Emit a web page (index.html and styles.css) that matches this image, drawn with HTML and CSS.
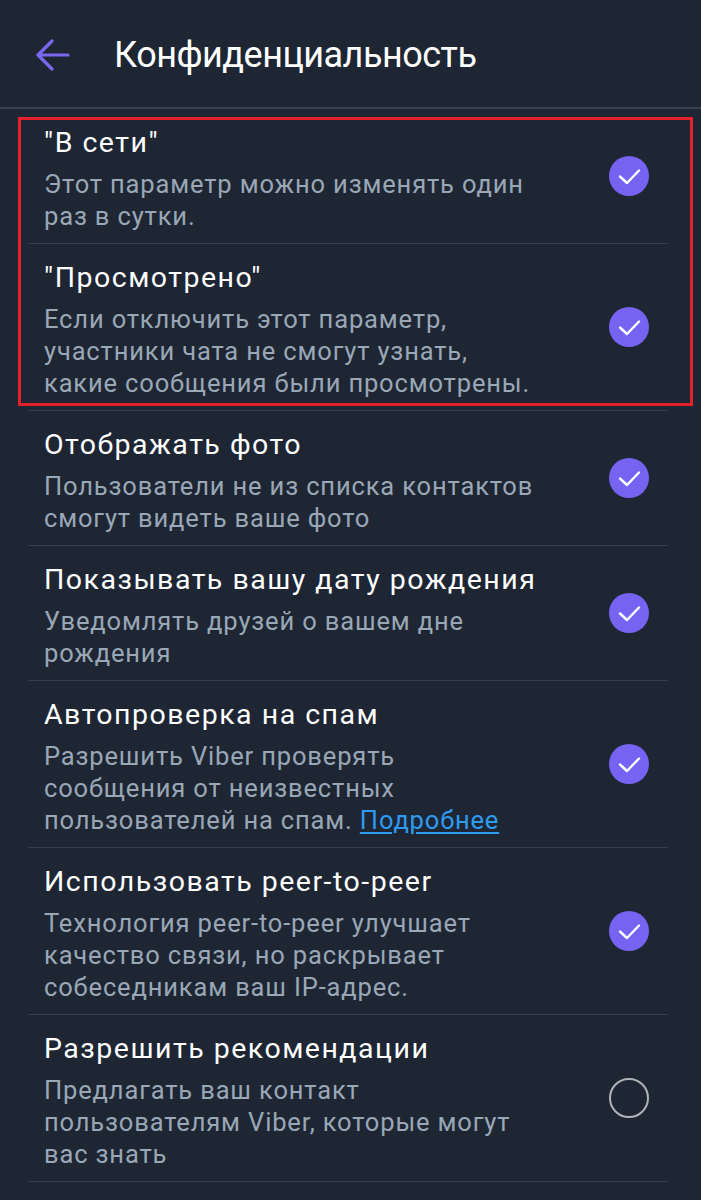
FILE: index.html
```html
<!DOCTYPE html>
<html lang="ru">
<head>
<meta charset="utf-8">
<link rel="stylesheet" href="styles.css">
</head>
<body>
<header class="topbar">
  <svg class="back" width="34" height="32" viewBox="0 0 34 32"><path d="M32 16H3M16 2L2 16l14 14" fill="none" stroke="#7a67f0" stroke-width="3.2" stroke-linecap="round" stroke-linejoin="round"/></svg>
  <h1 class="title">Конфиденциальность</h1>
</header>
<main class="list">
  <div class="row">
    <div class="text"><div class="name">"В сети"</div><div class="desc">Этот параметр можно изменять один раз в сутки.</div></div>
    <span class="check on"><svg width="40" height="40" viewBox="0 0 40 40"><path d="M11 20.5l7 6.5 12-12.5" fill="none" stroke="#fff" stroke-width="2.4" stroke-linecap="round" stroke-linejoin="round"/></svg></span>
  </div>
  <div class="row">
    <div class="text"><div class="name">"Просмотрено"</div><div class="desc">Если отключить этот параметр, участники чата не смогут узнать, какие сообщения были просмотрены.</div></div>
    <span class="check on"><svg width="40" height="40" viewBox="0 0 40 40"><path d="M11 20.5l7 6.5 12-12.5" fill="none" stroke="#fff" stroke-width="2.4" stroke-linecap="round" stroke-linejoin="round"/></svg></span>
  </div>
  <div class="row">
    <div class="text"><div class="name">Отображать фото</div><div class="desc">Пользователи не из списка контактов смогут видеть ваше фото</div></div>
    <span class="check on"><svg width="40" height="40" viewBox="0 0 40 40"><path d="M11 20.5l7 6.5 12-12.5" fill="none" stroke="#fff" stroke-width="2.4" stroke-linecap="round" stroke-linejoin="round"/></svg></span>
  </div>
  <div class="row">
    <div class="text"><div class="name">Показывать вашу дату рождения</div><div class="desc">Уведомлять друзей о вашем дне рождения</div></div>
    <span class="check on"><svg width="40" height="40" viewBox="0 0 40 40"><path d="M11 20.5l7 6.5 12-12.5" fill="none" stroke="#fff" stroke-width="2.4" stroke-linecap="round" stroke-linejoin="round"/></svg></span>
  </div>
  <div class="row">
    <div class="text"><div class="name">Автопроверка на спам</div><div class="desc">Разрешить Viber проверять сообщения от неизвестных пользователей на спам. <a class="more" href="#">Подробнее</a></div></div>
    <span class="check on"><svg width="40" height="40" viewBox="0 0 40 40"><path d="M11 20.5l7 6.5 12-12.5" fill="none" stroke="#fff" stroke-width="2.4" stroke-linecap="round" stroke-linejoin="round"/></svg></span>
  </div>
  <div class="row">
    <div class="text"><div class="name">Использовать peer-to-peer</div><div class="desc">Технология peer-to-peer улучшает качество связи, но раскрывает собеседникам ваш IP-адрес.</div></div>
    <span class="check on"><svg width="40" height="40" viewBox="0 0 40 40"><path d="M11 20.5l7 6.5 12-12.5" fill="none" stroke="#fff" stroke-width="2.4" stroke-linecap="round" stroke-linejoin="round"/></svg></span>
  </div>
  <div class="row">
    <div class="text"><div class="name">Разрешить рекомендации</div><div class="desc">Предлагать ваш контакт пользователям Viber, которые могут вас знать</div></div>
    <span class="check off"></span>
  </div>
</main>
<div class="highlight" aria-hidden="true"></div>
</body>
</html>
```
FILE: styles.css
```css
* { box-sizing: border-box; }
html, body { margin: 0; padding: 0; }
body {
  position: relative;
  background: #1e2634;
  font-family: Roboto, "Noto Sans", sans-serif;
  color: #fff;
  width: 701px;
  height: 1200px;
  overflow: hidden;
}
.topbar {
  height: 109px;
  display: flex;
  align-items: center;
  padding-left: 36px;
  border-bottom: 2px solid #35414f;
}
.back { display: block; margin-top: 2px; }
.title {
  margin: 3px 0 0 44px;
  font-weight: 400;
  font-size: 36px;
  letter-spacing: -0.5px;
  color: #fff;
  line-height: 42px;
}
.list { padding: 0 33px 0 28px; }
.row {
  display: flex;
  align-items: center;
  border-bottom: 1px solid #334050;
  padding: 16px 0 11px 16px;
}
.text { flex: 1; min-width: 0; }
.name {
  font-size: 28.5px;
  letter-spacing: 1.5px;
  line-height: 36px;
  color: #fff;
  margin-bottom: 7px;
  white-space: nowrap;
}
.desc {
  font-size: 25.5px;
  letter-spacing: 0.85px;
  line-height: 32px;
  color: #9aa7b6;
  max-width: 496px;
}
.more { color: #2e9bf0; text-decoration: underline; text-underline-offset: 3px; text-decoration-thickness: 2px; }
.check {
  width: 40px;
  height: 40px;
  border-radius: 50%;
  flex: none;
  margin: 0 19px 5px 10px;
  display: block;
}
.check.on { background: #7763f2; }
.check.off { border: 2px solid #b0b3b8; }
.check svg { display: block; }
.highlight {
  position: absolute;
  left: 18px;
  top: 117px;
  width: 675px;
  height: 289px;
  border: 3px solid #e3202b;
  pointer-events: none;
}
```
